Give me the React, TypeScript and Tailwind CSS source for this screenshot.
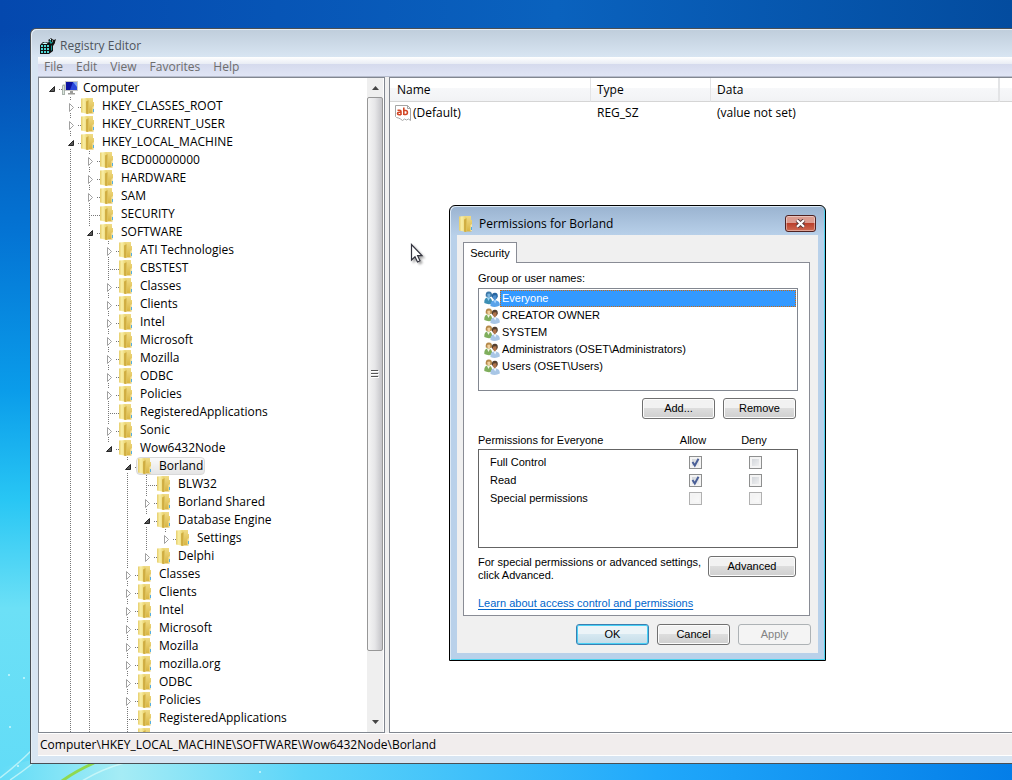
import type { ReactNode } from "react";

interface KeyNode {
    name: string;
    open?: boolean;
    leaf?: boolean;
    selected?: boolean;
    children?: KeyNode[];
}

interface PermissionRow {
    name: string;
    allow: boolean;
    disabled?: boolean;
}

const registry: KeyNode = {
    name: "Computer",
    open: true,
    children: [
        { name: "HKEY_CLASSES_ROOT" },
        { name: "HKEY_CURRENT_USER" },
        {
            name: "HKEY_LOCAL_MACHINE",
            open: true,
            children: [
                { name: "BCD00000000" },
                { name: "HARDWARE" },
                { name: "SAM" },
                { name: "SECURITY", leaf: true },
                {
                    name: "SOFTWARE",
                    open: true,
                    children: [
                        { name: "ATI Technologies" },
                        { name: "CBSTEST", leaf: true },
                        { name: "Classes" },
                        { name: "Clients" },
                        { name: "Intel" },
                        { name: "Microsoft" },
                        { name: "Mozilla" },
                        { name: "ODBC" },
                        { name: "Policies" },
                        { name: "RegisteredApplications", leaf: true },
                        { name: "Sonic" },
                        {
                            name: "Wow6432Node",
                            open: true,
                            children: [
                                {
                                    name: "Borland",
                                    open: true,
                                    selected: true,
                                    children: [
                                        { name: "BLW32", leaf: true },
                                        { name: "Borland Shared" },
                                        { name: "Database Engine", open: true, children: [{ name: "Settings" }] },
                                        { name: "Delphi" },
                                    ],
                                },
                                { name: "Classes" },
                                { name: "Clients" },
                                { name: "Intel" },
                                { name: "Microsoft" },
                                { name: "Mozilla" },
                                { name: "mozilla.org" },
                                { name: "ODBC" },
                                { name: "Policies" },
                                { name: "RegisteredApplications", leaf: true },
                                { name: "", leaf: true },
                            ],
                        },
                    ],
                },
                { name: "" },
            ],
        },
        { name: "" },
    ],
};

const menus = ["File", "Edit", "View", "Favorites", "Help"];
const users = ["Everyone", "CREATOR OWNER", "SYSTEM", "Administrators (OSET\\Administrators)", "Users (OSET\\Users)"];
const permissions: PermissionRow[] = [
    { name: "Full Control", allow: true },
    { name: "Read", allow: true },
    { name: "Special permissions", allow: false, disabled: true },
];

const FolderIcon = () => (
    <svg className="h-4 w-4 shrink-0" viewBox="0 0 16 16">
        <defs>
            <linearGradient id="folder-front" x1="0" x2="1">
                <stop offset="0" stopColor="#e6cd6c" />
                <stop offset="0.4" stopColor="#f9efa6" />
                <stop offset="1" stopColor="#e8d06a" />
            </linearGradient>
            <linearGradient id="folder-back" x1="0" x2="0" y1="0" y2="1">
                <stop offset="0" stopColor="#f0dc86" />
                <stop offset="1" stopColor="#d9b541" />
            </linearGradient>
        </defs>
        <path d="M6 0h6v4h1v11l-1 .5H5z" fill="url(#folder-back)" />
        <path d="M11.500 9l1.500-1v7h-1.500z" fill="#f3e6ad" />
        <path d="M12 11h1v3h-1z" fill="#55aee0" />
        <path d="M0 .5L6 0l1 1.500V16l-2-.5-5-1z" fill="url(#folder-front)" />
        <path d="M5 3.500l2-1V16l-2-.6z" fill="#c9a436" opacity=".8" />
        <path d="M7 2.500l1-1V15l-1 1z" fill="#dcc05a" />
    </svg>
);

const ComputerIcon = () => (
    <svg className="h-4 w-4 shrink-0" viewBox="0 0 16 16">
        <path d="M0 5.500l1-1h2V15H0z" fill="#a9b3ac" />
        <path d="M1 6h1v8H1z" fill="#dbe5dc" />
        <path d="M3 1h13v10H3z" fill="#c9c9c6" />
        <path d="M4 2h11v8H4z" fill="#2a48dc" />
        <path d="M4 2h7L8 10H4z" fill="#0c12a0" />
        <path d="M11 2h4v5z" fill="#7aa1f0" />
        <path d="M8 11h3v2H8zM6 13h7v1.500H6z" fill="#9b9b98" />
    </svg>
);

const RegistryIcon = () => (
    <svg className="h-4 w-4 shrink-0" viewBox="0 0 16 16">
        <path d="M0 7l3-3h4l1 1 1-2-1-1 2-1 1-1 1 1 2 1 2-1-1 3v1l-2 3v5l-4 3H0z" fill="#111" />
        <path d="M1 7h2v2H1zM4 7h2v2H4zM7 7h2v2H7zM1 10h2v2H1zM4 10h2v2H4zM7 10h2v2H7zM1 13h2v2H1zM4 13h2v2H4zM7 13h2v2H7z" fill="#4fd8d6" />
        <path d="M2 6l2-1.500h2.500l1 1.500z" fill="#c6ffff" />
        <path d="M9 3l2-1v2h2l-2 2-1-1zM11 8l1-1v5l-1 1z" fill="#139c9a" />
        <path d="M12 2l1 1-1 1zM10 1h1v1h-1z" fill="#e6ffff" />
    </svg>
);

const StringValueIcon = () => (
    <svg className="h-4 w-4 shrink-0" viewBox="0 0 16 16">
        <path d="M.5.500h12l3 3v12l-2-1.500-2 1-2-1-2 1.500-2-1.500-2-1-2-.5-1-1z" fill="#fff" stroke="#a5a5a5" />
        <path d="M12.500.500v3h3" fill="none" stroke="#a5a5a5" />
        <g fill="none" stroke="#d24726" strokeWidth="1.600">
            <path d="M2.500 5.300h2.200q1.300 0 1.300 1.300V10M6 7.300H4q-1.500 0-1.500 1.200T4 9.700h2" />
            <path d="M8.800 2.500V10M8.800 9.500h2q1.600 0 1.600-2t-1.600-2h-2" />
        </g>
    </svg>
);

const GroupIcon = ({ active }: { active?: boolean }) => (
    <svg className="h-4 w-4 shrink-0" viewBox="0 0 16 16">
        <path d="M.3 12q-.3-5 3-5.500h2q3 1 3 6-4 1.500-8-.5z" fill={active ? "#3c8fb4" : "#7fae5c"} />
        <path d="M3 7l1.500 3L6 7z" fill={active ? "#9ed3f5" : "#f4f4e6"} />
        <path d="M1.800 5.500Q1 .5 4.800.4T8 5.500Q5 7 1.800 5.500z" fill={active ? "#3f79a8" : "#b5894a"} />
        <path d="M3.300 3q2-.8 3 0 .5 3-1.300 4Q3 6 3.300 3z" fill={active ? "#79b4df" : "#f0cf9d"} />
        <path d="M6.500 15q-.5-4.500 3-5.500h3q3.500 1 3.300 5-4.500 2.500-9.300.5z" fill={active ? "#5aa3ea" : "#a8c6e6"} />
        <path d="M9.500 9.500l1.700 3 1.300-3z" fill={active ? "#a6d3ff" : "#eef6ff"} />
        <path d="M7.800 5.500q-.2-3.500 3-3.700t3 3.700Q13.500 8 11 8T7.800 5.500z" fill={active ? "#28659f" : "#54402f"} />
        <path d="M9 4.800q2-1 3.500-.2.400 4-1.700 5Q8.700 8.500 9 4.800z" fill={active ? "#4d8fce" : "#b0734a"} />
    </svg>
);

const CloseIcon = () => (
    <svg className="h-[9px] w-[11px]" viewBox="0 0 11 9">
        <path d="M2 1.200l7 6.600M9 1.200L2 7.800" stroke="#5b3a3a" strokeWidth="4" />
        <path d="M2 1.200l7 6.600M9 1.200L2 7.800" stroke="#fff" strokeWidth="2.200" />
    </svg>
);

const CursorIcon = () => (
    <svg className="h-6 w-[18px] drop-shadow-[2px_2px_1px_rgba(0,0,0,0.35)]" viewBox="0 0 18 24">
        <path d="M1.500 1.500v15.500l3.500-3.300 2.500 5.300 2.500-1.200-2.400-5.100H12z" fill="#fff" stroke="#33343f" strokeWidth="1.200" />
    </svg>
);

// Dotted lines and the expander in front of a key
const Connector = ({ node, last, root }: { node: KeyNode; last: boolean; root: boolean }) => (
    <svg className="h-[18px] w-[18px] shrink-0" viewBox="0 0 18 18" fill="none" stroke="#777" shapeRendering="crispEdges">
        {!root && node.leaf && <path d={last ? "M7.500 0V10" : "M7.500 0V18"} strokeDasharray="1 1" />}
        {!root && !node.leaf && <path d={last ? "M7.500 0V3" : "M7.500 0V3M7.500 16V18"} strokeDasharray="1 1" />}
        <path d={node.leaf ? "M7 10.500H18" : "M15 10.500H18"} strokeDasharray="1 1" />
        {!node.leaf && !node.open && (
            <path d="M6.500 6.500v8l4-4z" stroke="#a0a0a0" fill="#fff" shapeRendering="auto" />
        )}
        {node.open && <path d="M10.500 7.500v5h-5z" stroke="#262626" fill="#595959" shapeRendering="auto" />}
    </svg>
);

const TreeNode = ({ node, trail, last }: { node: KeyNode; trail: boolean[]; last: boolean }) => {
    const root = node === registry;
    const childTrail = root ? [false] : [...trail, !last];

    return (
        <>
            <div role="treeitem" aria-selected={!!node.selected} className="flex h-[18px] items-center">
                {trail.map((line, i) => (
                    <svg key={i} className="h-[18px] w-[19px] shrink-0" viewBox="0 0 19 18" shapeRendering="crispEdges">
                        {line && <path d="M7.500 0V18" stroke="#777" strokeDasharray="1 1" />}
                    </svg>
                ))}
                <Connector node={node} last={last} root={root} />
                <div
                    className={
                        node.selected
                            ? "-ml-0.5 flex h-[18px] items-center gap-[5px] rounded-sm border border-[#d9d9d9] bg-linear-to-b from-[#fafafa] to-[#e5e5e5] px-px"
                            : "flex items-center gap-[5px]"
                    }
                >
                    {root ? <ComputerIcon /> : <FolderIcon />}
                    <span className="whitespace-nowrap">{node.name}</span>
                </div>
            </div>
            {node.children?.map((child, i) => (
                <TreeNode key={i} node={child} trail={childTrail} last={i === node.children!.length - 1} />
            ))}
        </>
    );
};

const DialogButton = ({ children, wide }: { children: ReactNode; wide?: boolean }) => (
    <button
        className={`${wide ? "w-[88px]" : "w-[73px]"} h-[21px] rounded-[3px] border border-[#707070] bg-linear-to-b from-[#f2f2f2] from-50% via-[#dddddd] via-50% to-[#cfcfcf] shadow-[inset_0_0_0_1px_#fcfcfc]`}
    >
        {children}
    </button>
);

const CheckBox = ({ label, checked, disabled }: { label: string; checked?: boolean; disabled?: boolean }) => (
    <span className="relative mx-auto block h-[13px] w-[13px]">
        <input
            type="checkbox"
            aria-label={label}
            defaultChecked={checked}
            disabled={disabled}
            className="block h-[13px] w-[13px] appearance-none border border-[#8e8f8f] bg-linear-to-br from-[#cbcfd5] to-[#f6f6f6] shadow-[inset_0_0_0_2px_#f4f4f4] disabled:border-[#b1b1b1] disabled:from-[#f0f0f0] disabled:to-[#fbfbfb]"
        />
        {checked && (
            <svg className="pointer-events-none absolute inset-0" viewBox="0 0 13 13">
                <path d="M3.500 6l2.300 3.500L9.500 2.800" fill="none" stroke="#4a5f97" strokeWidth="2" />
            </svg>
        )}
    </span>
);

const RegistryTree = () => (
    <div className="flex w-[347px] shrink-0 border border-[#828790] bg-white pr-px">
        <div role="tree" className="h-full min-w-0 flex-1 overflow-hidden pt-px pl-[5px]">
            <TreeNode node={registry} trail={[]} last />
        </div>
        <div className="flex w-4 shrink-0 flex-col bg-[#efefef] py-px">
            <button aria-label="Scroll up" className="flex h-[18px] shrink-0 items-center justify-center">
                <svg className="h-1 w-[7px]" viewBox="0 0 7 4">
                    <path d="M0 4h7L3.500 0z" fill="#444" />
                </svg>
            </button>
            <div className="flex h-[554px] items-center justify-center rounded-xs border border-[#979797] bg-linear-to-r from-[#f5f5f5] via-[#e6e6e8] to-[#c4c4c8]">
                <svg className="h-2 w-2" viewBox="0 0 8 8" shapeRendering="crispEdges">
                    <path d="M0 .5h7M0 3.500h7M0 6.500h7" stroke="#555" />
                    <path d="M0 1.500h8M0 4.500h8M0 7.500h8" stroke="#fff" />
                </svg>
            </div>
            <button aria-label="Scroll down" className="mt-auto flex h-[18px] shrink-0 items-center justify-center">
                <svg className="h-1 w-[7px]" viewBox="0 0 7 4">
                    <path d="M0 0h7L3.500 4z" fill="#444" />
                </svg>
            </button>
        </div>
    </div>
);

const ValueList = () => (
    <div className="min-w-0 flex-1 border-y border-l border-[#828790] bg-white">
        <table className="w-full table-fixed border-separate border-spacing-0 text-left">
            <thead>
                <tr className="h-6 bg-linear-to-b from-white from-40% via-[#f7f8fa] via-40% to-[#f1f2f4]">
                    <th className="w-[201px] border-r border-b border-r-[#e3e4e6] border-b-[#d5d5d5] pl-[7px] font-normal">Name</th>
                    <th className="w-[120px] border-r border-b border-r-[#e3e4e6] border-b-[#d5d5d5] pl-1.5 font-normal">Type</th>
                    <th className="w-[289px] border-r-2 border-b border-r-[#e3e4e6] border-b-[#d5d5d5] pl-1.5 font-normal">Data</th>
                    <td className="border-b border-[#d5d5d5]" />
                </tr>
            </thead>
            <tbody>
                <tr className="h-[22px]">
                    <td className="pl-[5px]">
                        <div className="flex items-center gap-0.5">
                            <StringValueIcon />
                            (Default)
                        </div>
                    </td>
                    <td className="pl-1.5">REG_SZ</td>
                    <td className="pl-1.5">(value not set)</td>
                    <td />
                </tr>
            </tbody>
        </table>
    </div>
);

const PermissionsDialog = () => (
    <div
        role="dialog"
        aria-label="Permissions for Borland"
        className="absolute top-[205px] left-[449px] w-[377px] rounded-t-md border border-black bg-linear-to-b from-[#9ab3d0] to-[#b9d1ea] to-[30px] px-[7px] pb-[7px] font-['Liberation_Sans',sans-serif] text-[11px] leading-[13px] text-black shadow-[inset_1px_1px_0_#dce9f5,inset_-1px_-1px_0_#4fd2ee]"
    >
        <div className="flex h-[29px] items-center gap-1 pt-1.5 pr-0.5 pl-0.5 font-['Open_Sans',sans-serif] text-[12px]">
            <FolderIcon />
            <h2 className="flex-1">Permissions for Borland</h2>
            <button
                aria-label="Close"
                className="flex h-[17px] w-[31px] items-center justify-center rounded-[3px] border border-[#4f2222] bg-linear-to-b from-[#dc9c90] from-45% via-[#b83b28] via-45% to-[#cf6a52] shadow-[inset_0_0_0_1px_rgba(255,255,255,0.4)]"
            >
                <CloseIcon />
            </button>
        </div>

        <div className="bg-[#f0f0f0] pt-[7px] pr-[7px] pb-2 pl-1.5">
            <div className="flex">
                <button className="relative -mb-px h-[21px] w-[54px] border border-b-0 border-[#898c95] bg-white">
                    Security
                </button>
            </div>
            <div className="mr-px border border-[#898c95] bg-white pt-[9px] pr-[11px] pb-[5px] pl-3.5">
                <h3>Group or user names:</h3>
                <ul role="listbox" className="mt-[3px] h-[103px] border border-[#828790] pt-px pr-px pl-[5px]">
                    {users.map((user, i) => (
                        <li key={user} role="option" aria-selected={i === 0} className="flex h-[17px] items-center">
                            <GroupIcon active={i === 0} />
                            <span
                                className={
                                    i === 0
                                        ? "flex h-[17px] flex-1 items-center border border-dotted border-[#cc6a11] bg-[#3399ff] px-px text-white"
                                        : "pl-0.5"
                                }
                            >
                                {user}
                            </span>
                        </li>
                    ))}
                </ul>
                <div className="mt-[7px] mr-0.5 flex justify-end gap-2">
                    <DialogButton>Add...</DialogButton>
                    <DialogButton>Remove</DialogButton>
                </div>

                <table className="mt-[15px] w-full table-fixed">
                    <thead>
                        <tr className="h-[15px]">
                            <th className="text-left align-top font-normal">Permissions for Everyone</th>
                            <th className="w-[60px] align-top font-normal">Allow</th>
                            <th className="w-[62px] align-top font-normal">Deny</th>
                            <td className="w-[13px]" />
                        </tr>
                    </thead>
                </table>
                <div className="h-[99px] border border-[#646464] pt-[3px]">
                    <table className="w-full table-fixed">
                        <tbody>
                            {permissions.map((row) => (
                                <tr key={row.name} className="h-[18px]">
                                    <td className="pl-[11px]">{row.name}</td>
                                    <td className="w-[60px]">
                                        <CheckBox label={`Allow ${row.name}`} checked={row.allow} disabled={row.disabled} />
                                    </td>
                                    <td className="w-[60px]">
                                        <CheckBox label={`Deny ${row.name}`} disabled={row.disabled} />
                                    </td>
                                    <td className="w-3" />
                                </tr>
                            ))}
                        </tbody>
                    </table>
                </div>

                <div className="mt-2 mr-0.5 flex justify-between">
                    <p className="whitespace-nowrap">
                        For special permissions or advanced settings,
                        <br />
                        click Advanced.
                    </p>
                    <DialogButton wide>Advanced</DialogButton>
                </div>
                <a href="#permissions" className="mt-[15px] inline-block text-[#0066cc] underline underline-offset-2">
                    Learn about access control and permissions
                </a>
            </div>
            <div className="mt-2 flex justify-end gap-2">
                <button className="h-[21px] w-[73px] rounded-[3px] border border-[#3c7fb1] bg-linear-to-b from-[#ecf4f8] from-50% via-[#d6e8f1] via-50% to-[#c4dce8] shadow-[inset_0_0_0_1px_#48d0f5]">
                    OK
                </button>
                <DialogButton>Cancel</DialogButton>
                <button disabled className="h-[21px] w-[73px] rounded-[3px] border border-[#adb2b5] bg-[#f4f4f4] text-[#838383]">
                    Apply
                </button>
            </div>
        </div>
    </div>
);

export default function App() {
    return (
        <div className="relative flex h-screen flex-col overflow-hidden bg-[linear-gradient(to_bottom,transparent_4%,#0468c8_22%,#0474d4_30%,#0a9cea_50%,#28c6f4_64%,#6ce0f6_78%,#62dcf7_100%),linear-gradient(to_right,#0448ae_0%,#0a62be_55%,#034c9f_100%)] pt-7 pb-4 pl-[30px] font-['Open_Sans',sans-serif] text-[12px] leading-4 text-black">
            {/* light streaks of the wallpaper under the window */}
            <svg className="absolute bottom-0 left-0 h-[180px] w-full" viewBox="0 0 1012 180" preserveAspectRatio="none">
                <defs>
                    <linearGradient id="horizon">
                        <stop offset="0" stopColor="#62dcf7" />
                        <stop offset="0.12" stopColor="#a5ecf5" />
                        <stop offset="0.3" stopColor="#5cd5f9" />
                        <stop offset="0.65" stopColor="#20a8fb" />
                        <stop offset="1" stopColor="#047ee8" />
                    </linearGradient>
                </defs>
                <path d="M31 160h981v20H0v-12z" fill="url(#horizon)" />
                <path d="M62 181q14-10 32-18" fill="none" stroke="#8fd94f" strokeWidth="3" />
                <path d="M82 181q20-12 42-18M0 178q18-14 32-28M10 180q12-8 22-16" fill="none" stroke="#d9fbfa" strokeWidth="1.500" opacity=".7" />
                <g fill="#e6ffff" opacity=".8">
                    <circle cx="9" cy="75" r="1" />
                    <circle cx="24" cy="78" r="1" />
                    <circle cx="10" cy="127" r="1" />
                    <circle cx="18" cy="166" r="1" />
                    <circle cx="260" cy="172" r="1" />
                </g>
            </svg>

            <main className="relative flex min-h-0 flex-1 flex-col rounded-tl-md border border-r-0 border-[#4a4f55] bg-linear-to-b from-[#bfcddb] to-[#d8e5f2] to-[28px] pb-[7px] pl-[7px] shadow-[inset_1px_1px_0_#e6eef5]">
                <header className="flex h-7 shrink-0 items-center gap-1 pt-1.5 pl-0.5 text-[#4e545c]">
                    <RegistryIcon />
                    <h1>Registry Editor</h1>
                </header>
                <nav className="flex h-5 shrink-0 items-center gap-[13px] border-b border-[#b6bccc] bg-[linear-gradient(to_bottom,#ffffff_0%,#e9edf5_36%,#d5daed_36%,#e0e5f5_100%)] pl-1.5 text-[#6d6d6d]">
                    {menus.map((menu) => (
                        <button key={menu}>{menu}</button>
                    ))}
                </nav>
                <div className="flex min-h-0 flex-1 gap-1 bg-[#f0f0f0]">
                    <RegistryTree />
                    <ValueList />
                </div>
                <footer className="flex h-[23px] shrink-0 items-center border-y border-white bg-[#f1eded] pl-0.5">
                    Computer\HKEY_LOCAL_MACHINE\SOFTWARE\Wow6432Node\Borland
                </footer>
            </main>

            <PermissionsDialog />
            <div className="absolute top-[243px] left-[410px]">
                <CursorIcon />
            </div>
        </div>
    );
}
